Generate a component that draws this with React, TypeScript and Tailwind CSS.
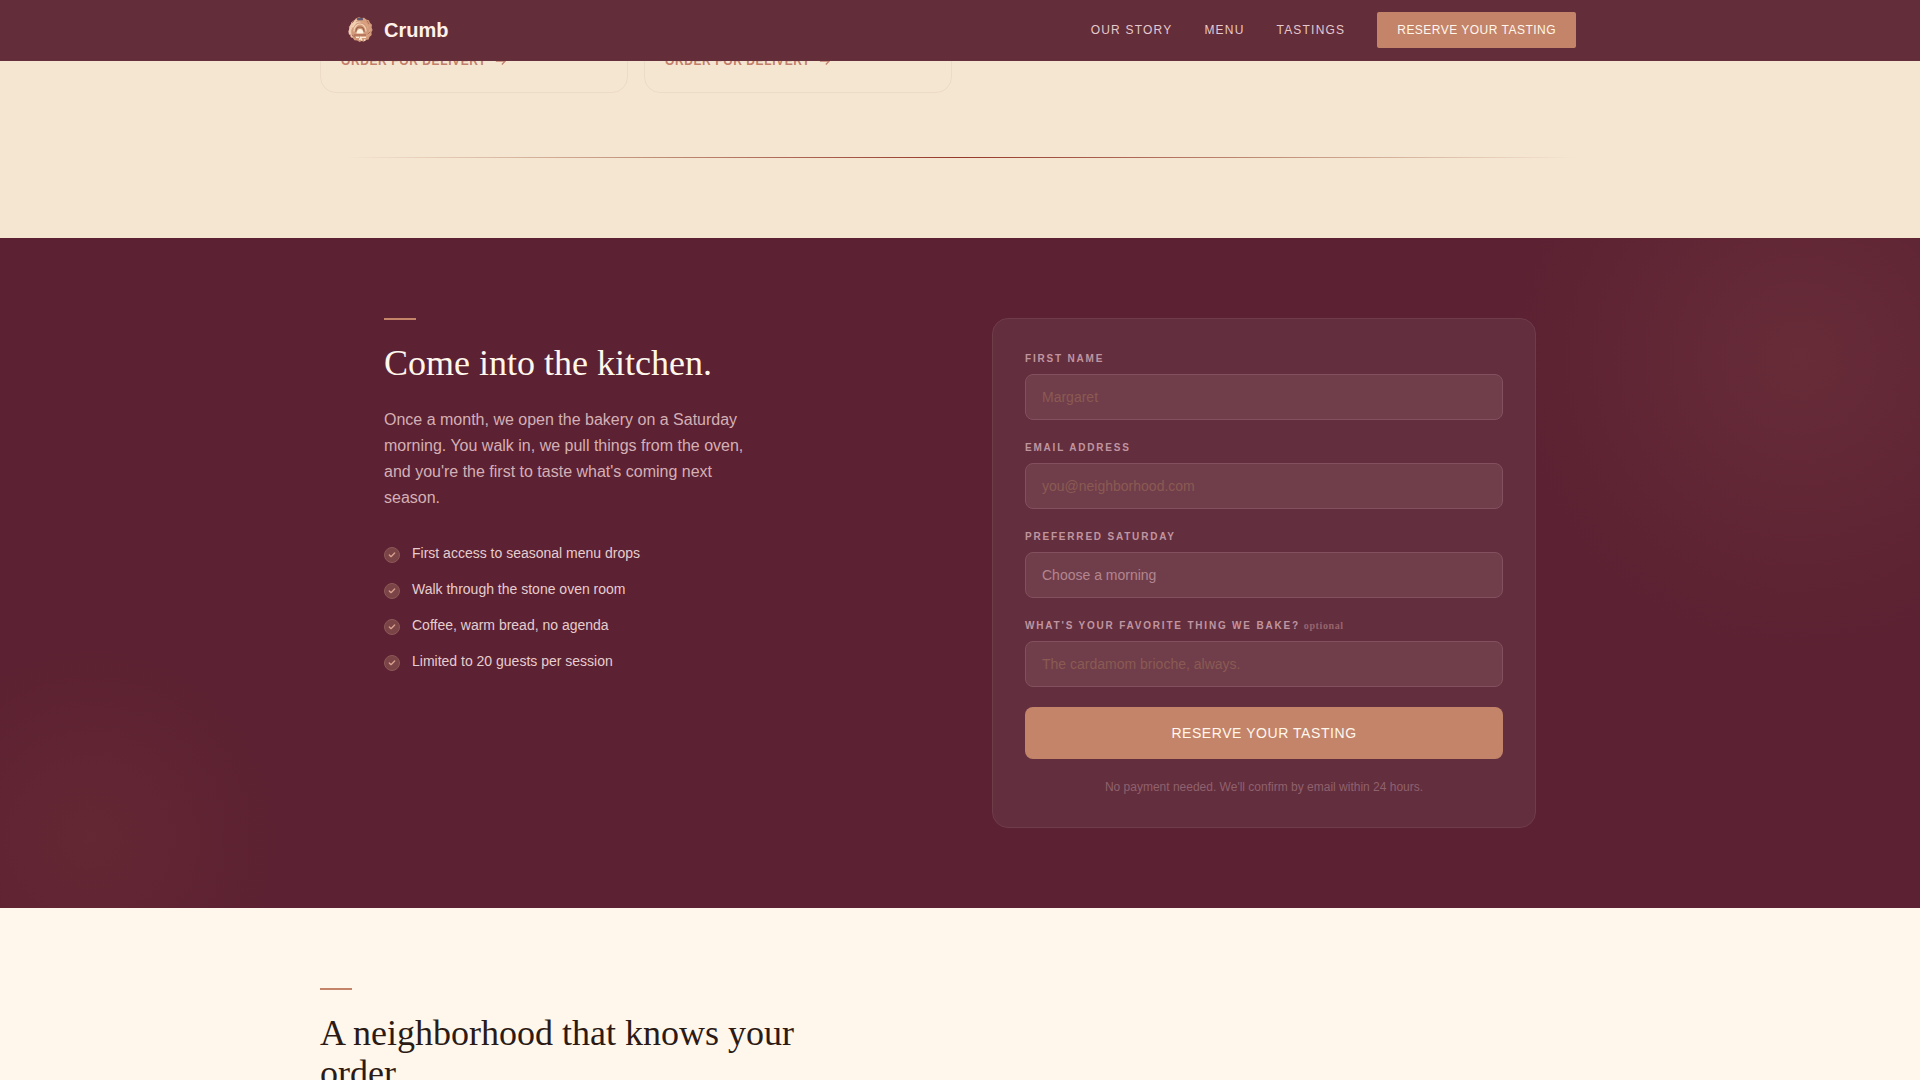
import { useState } from "react";
import { Check } from "lucide-react";

const NAV_LINKS = [
  { label: "Our Story", href: "#story" },
  { label: "Menu", href: "#menu" },
  { label: "Tastings", href: "#tastings" },
];

const PERKS = [
  "First access to seasonal menu drops",
  "Walk through the stone oven room",
  "Coffee, warm bread, no agenda",
  "Limited to 20 guests per session",
];

const MORNINGS = ["First Saturday", "Second Saturday", "Third Saturday"];

const fieldClass =
  "block h-[46px] w-full appearance-none rounded-lg border border-[#835060] bg-[#703e4a] px-4 text-sm outline-none placeholder:text-[#8a5a52] focus:border-[#c4846a]";

export default function App() {
  return (
    <div className="flex h-screen flex-col overflow-hidden bg-[#fff7ec] font-['Liberation_Sans',Arial,sans-serif] text-[#2c1a14]">
      <SiteHeader />
      <main>
        <MenuTail />
        <Tastings />
        <Neighborhood />
      </main>
    </div>
  );
}

function SiteHeader() {
  return (
    <header className="sticky top-0 z-10 shrink-0 border-b border-[#652f3c] bg-[#632d3a]">
      <div className="mx-auto flex max-w-7xl items-center justify-between px-6 py-3">
        <a href="#top" className="flex items-center gap-2 text-xl font-bold text-[#fff1ea]">
          <Logo />
          Crumb
        </a>
        <nav className="flex items-center gap-8 text-xs">
          {NAV_LINKS.map((l) => (
            <a key={l.href} href={l.href} className="tracking-[0.1em] text-[#e6c9cc] uppercase">
              {l.label}
            </a>
          ))}
          <button
            type="button"
            className="h-9 rounded-xs bg-[#c4846a] px-5 tracking-[0.04em] text-[#fff7ec] uppercase"
          >
            Reserve your tasting
          </button>
        </nav>
      </div>
    </header>
  );
}

/** Round rosette pastry. */
function Logo() {
  return (
    <svg viewBox="0 0 32 32" className="size-8" aria-hidden="true">
      <path
        d="M12 4.2 15 3.2l2.2.8 3-.3 2 1.8 2.7.7 1 2.6 2.1 2-.4 2.6 1 2.6-1.2 2.3.3 2.8-2.2 1.8-.9 2.5-2.8.6-2 1.7-2.2-.8-2 1.2-2.4-1.6-2.8-.2-1.6-2.2-2.4-1.2-.3-2.8-1.7-2.2 1-2.5-.6-2.6 1.9-1.9.5-2.7 2.5-1.1Z"
        fill="#d09a7b"
      />
      <g fill="none" strokeLinecap="round">
        <path d="M6 16c0-5 3-9 7-10M5.5 20c-1-6 3-10 6-12M8 23c-3-5-1-10 3-13" stroke="#f0cdb0" strokeWidth="1.4" />
        <path d="M17 5c4 0 8 3 9 7M17 8c3 0 6 2 7 6M26 15c0 3-1 6-4 8" stroke="#dfa380" strokeWidth="1.5" />
        <path d="M10 17c0-4 3-7 6-7s6 3 6 7M9 13c1-3 4-5 7-5" stroke="#f4d3b5" strokeWidth="1.2" />
        <path d="M12 17.5c0-3 2-4.5 4-4.5s4 1.5 4 4.5" stroke="#9a6048" strokeWidth="1.1" />
        <path d="M23 7l2 3M24 20l2-2M8 9l2-2M8 21l3 2" stroke="#a56a55" strokeWidth=".9" />
        <path d="M14 5.2h4" stroke="#5c5670" strokeWidth="2.2" />
      </g>
      <path d="M12.5 19.5c0-3 1.5-4.5 3.5-4.5s3.5 1.5 3.5 4.5Z" fill="#fff3df" />
      <path d="M10 21h12" stroke="#a96550" strokeWidth="1.2" />
      <path d="M12 23.3h3m2 0h5M15.5 26l1-2.5 1.5 3M20 26h1.5" stroke="#ffe9d2" strokeWidth="1.3" fill="none" />
    </svg>
  );
}

function MenuTail() {
  return (
    <section id="menu" className="bg-[#f5e6d2] pb-20">
      <div className="mx-auto grid h-8 max-w-7xl grid-cols-4 content-end gap-4 overflow-hidden">
        <DeliveryCard />
        <DeliveryCard />
      </div>
      <div className="mx-auto mt-16 max-w-7xl px-6">
        <div className="h-px bg-[linear-gradient(to_right,rgba(170,120,90,0),rgba(170,105,80,0.7)_25%,#96382a_50%,rgba(170,105,80,0.7)_75%,rgba(170,120,90,0))]" />
      </div>
    </section>
  );
}

function DeliveryCard() {
  return (
    <article className="rounded-2xl border border-[#ecdbc6] px-5 pt-8 pb-5">
      <a href="#order" className="flex items-center gap-2 text-xs leading-[22px] font-bold tracking-[0.05em] text-[#c27e6a] uppercase">
        Order for delivery
        <svg viewBox="0 0 14 14" className="size-3" fill="none" stroke="currentColor" strokeWidth="1.5" aria-hidden="true">
          <path d="M1 7h11M8 3l4 4-4 4" />
        </svg>
      </a>
    </article>
  );
}

function Tastings() {
  return (
    <section id="tastings" className="relative overflow-hidden bg-[#5c2132] py-20">
      <div className="pointer-events-none absolute -top-[180px] -right-[180px] size-[600px] bg-[radial-gradient(circle,rgba(196,132,106,0.11)_0%,transparent_70%)]" />
      <div className="pointer-events-none absolute -bottom-[130px] -left-[110px] size-[400px] bg-[radial-gradient(circle,rgba(190,110,70,0.08)_0%,transparent_70%)]" />
      <div className="relative mx-auto grid max-w-7xl grid-cols-2 items-start gap-16 px-16">
        <div>
          <div className="h-0.5 w-8 bg-[#c4846a]" />
          <h2 className="mt-[23px] font-['Liberation_Serif',serif] text-4xl leading-10 text-[#fff7ec]">
            Come into the kitchen.
          </h2>
          <p className="mt-6 max-w-sm leading-[26px] text-[#d4b0b6]">
            Once a month, we open the bakery on a Saturday morning. You walk in, we pull things from the oven, and
            you're the first to taste what's coming next season.
          </p>
          <ul className="mt-8 flex flex-col gap-4">
            {PERKS.map((perk) => (
              <li key={perk} className="flex items-start gap-3 text-sm text-[#e6cdcf]">
                <span className="mt-1 flex size-4 shrink-0 items-center justify-center rounded-full border border-[#8c5858] bg-[#7a4346] text-[#d8a090]">
                  <Check className="size-2" strokeWidth={4} />
                </span>
                {perk}
              </li>
            ))}
          </ul>
        </div>
        <TastingForm />
      </div>
    </section>
  );
}

function TastingForm() {
  const [name, setName] = useState("");
  const [email, setEmail] = useState("");
  const [morning, setMorning] = useState("");
  const [favorite, setFavorite] = useState("");

  return (
    <form
      className="rounded-2xl border border-[#6f3c4a] bg-[#632e3d] p-8 text-[#fff7ec]"
      onSubmit={(e) => e.preventDefault()}
    >
      <div className="flex flex-col gap-5">
        <div>
          <FieldLabel id="first-name">First name</FieldLabel>
          <input
            id="first-name"
            className={fieldClass}
            placeholder="Margaret"
            value={name}
            onChange={(e) => setName(e.target.value)}
          />
        </div>
        <div>
          <FieldLabel id="email">Email address</FieldLabel>
          <input
            id="email"
            type="email"
            className={fieldClass}
            placeholder="you@neighborhood.com"
            value={email}
            onChange={(e) => setEmail(e.target.value)}
          />
        </div>
        <div>
          <FieldLabel id="morning">Preferred Saturday</FieldLabel>
          <select
            id="morning"
            className={`${fieldClass} text-[#b48590]`}
            value={morning}
            onChange={(e) => setMorning(e.target.value)}
          >
            <option value="">Choose a morning</option>
            {MORNINGS.map((m) => (
              <option key={m}>{m}</option>
            ))}
          </select>
        </div>
        <div>
          <FieldLabel id="favorite" optional>
            What's your favorite thing we bake?
          </FieldLabel>
          <input
            id="favorite"
            className={fieldClass}
            placeholder="The cardamom brioche, always."
            value={favorite}
            onChange={(e) => setFavorite(e.target.value)}
          />
        </div>
        <button
          type="submit"
          className="h-[52px] w-full rounded-lg bg-[#c4846a] text-sm tracking-[0.04em] text-[#fff7ec] uppercase"
        >
          Reserve your tasting
        </button>
      </div>
      <p className="mt-5 text-center text-xs leading-4 text-[#8f616d]">
        No payment needed. We'll confirm by email within 24 hours.
      </p>
    </form>
  );
}

function FieldLabel({ id, optional, children }: { id: string; optional?: boolean; children: string }) {
  return (
    <label htmlFor={id} className="mb-2 block text-[10px] leading-[15px] font-bold tracking-[0.18em] text-[#c095a0] uppercase">
      {children}
      {optional && (
        <span className="ml-1 font-['Liberation_Serif',serif] tracking-[0.06em] text-[#96656f] normal-case">optional</span>
      )}
    </label>
  );
}

function Neighborhood() {
  return (
    <section id="story" className="mx-auto max-w-7xl py-20">
      <div className="h-0.5 w-8 bg-[#c4846a]" />
      <h2 className="mt-[23px] max-w-lg font-['Liberation_Serif',serif] text-4xl leading-10 text-[#2c1a14]">
        A neighborhood that knows your order.
      </h2>
    </section>
  );
}
